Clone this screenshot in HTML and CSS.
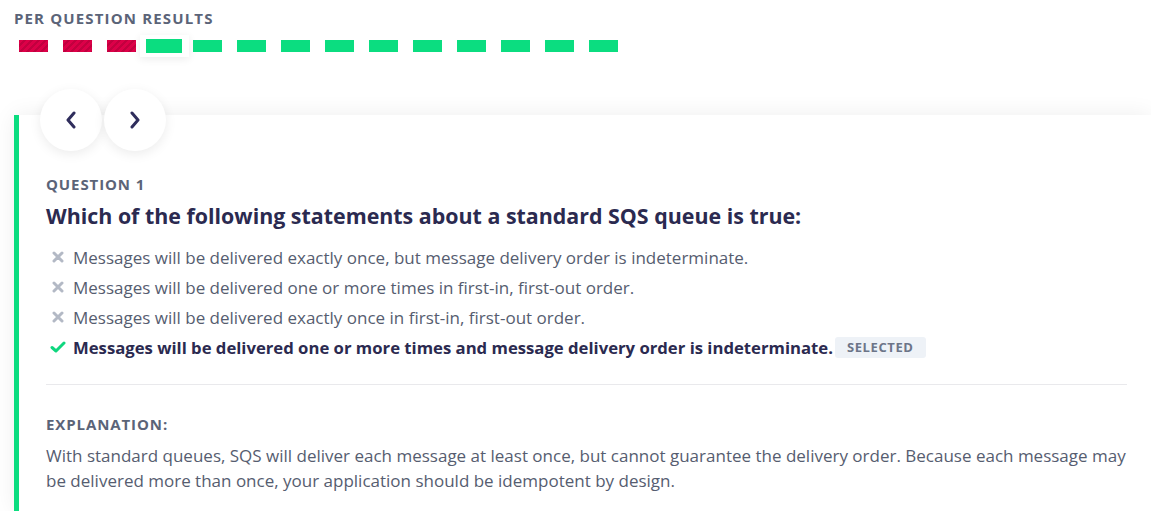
FILE: index.html
```html
<!DOCTYPE html>
<html>
<head>
<meta charset="utf-8">
<link rel="stylesheet" href="styles.css">
</head>
<body>
<div class="page">
  <h3 class="section-title">Per Question Results</h3>
  <div class="results">
    <span class="bar wrong"></span>
    <span class="bar wrong"></span>
    <span class="bar wrong"></span>
    <span class="bar right current"></span>
    <span class="bar right"></span>
    <span class="bar right"></span>
    <span class="bar right"></span>
    <span class="bar right"></span>
    <span class="bar right"></span>
    <span class="bar right"></span>
    <span class="bar right"></span>
    <span class="bar right"></span>
    <span class="bar right"></span>
    <span class="bar right"></span>
  </div>

  <div class="card">
    <div class="nav">
      <button class="nav-btn" aria-label="Previous">
        <svg width="14" height="18" viewBox="0 0 14 18"><path d="M10 2 L4 9 L10 16" fill="none" stroke="#2f2d5c" stroke-width="3" stroke-linecap="round" stroke-linejoin="round"/></svg>
      </button>
      <button class="nav-btn" aria-label="Next">
        <svg width="14" height="18" viewBox="0 0 14 18"><path d="M4 2 L10 9 L4 16" fill="none" stroke="#2f2d5c" stroke-width="3" stroke-linecap="round" stroke-linejoin="round"/></svg>
      </button>
    </div>
    <div class="label">Question 1</div>
    <h2 class="question">Which of the following statements about a standard SQS queue is true:</h2>
    <ul class="options">
      <li class="option">
        <svg class="icon" width="12" height="12" viewBox="0 0 12 12"><path d="M2 2 L10 10 M10 2 L2 10" stroke="#b3b9c5" stroke-width="3" stroke-linecap="round"/></svg>
        <span>Messages will be delivered exactly once, but message delivery order is indeterminate.</span>
      </li>
      <li class="option">
        <svg class="icon" width="12" height="12" viewBox="0 0 12 12"><path d="M2 2 L10 10 M10 2 L2 10" stroke="#b3b9c5" stroke-width="3" stroke-linecap="round"/></svg>
        <span>Messages will be delivered one or more times in first-in, first-out order.</span>
      </li>
      <li class="option">
        <svg class="icon" width="12" height="12" viewBox="0 0 12 12"><path d="M2 2 L10 10 M10 2 L2 10" stroke="#b3b9c5" stroke-width="3" stroke-linecap="round"/></svg>
        <span>Messages will be delivered exactly once in first-in, first-out order.</span>
      </li>
      <li class="option correct">
        <svg class="icon" width="16" height="12" viewBox="0 0 16 12"><path d="M2 6.5 L6 10 L14 2" fill="none" stroke="#0fd67e" stroke-width="3" stroke-linecap="round" stroke-linejoin="round"/></svg>
        <span>Messages will be delivered one or more times and message delivery order is indeterminate.</span>
        <span class="badge">Selected</span>
      </li>
    </ul>
    <hr class="divider">
    <div class="label expl-label">Explanation:</div>
    <p class="explanation">With standard queues, SQS will deliver each message at least once, but cannot guarantee the delivery order. Because each message may be delivered more than once, your application should be idempotent by design.</p>
  </div>
</div>
</body>
</html>
```

FILE: styles.css
```css
* { box-sizing: border-box; }
html, body { margin: 0; padding: 0; background: #fff; }
body {
  font-family: "Open Sans", "Noto Sans", sans-serif;
  color: #565d70;
  overflow: hidden;
}
.page { padding: 8px 0 0 14px; }

.section-title {
  margin: 0;
  font-size: 15px;
  font-weight: 700;
  letter-spacing: 1.15px;
  text-transform: uppercase;
  color: #5b6478;
  line-height: 20px;
}

.results {
  display: flex;
  align-items: center;
  gap: 15px;
  margin: 11px 0 0 5px;
  height: 14px;
  position: relative;
  z-index: 0;
}
.bar {
  display: block;
  width: 29px;
  height: 12px;
  flex: none;
}
.bar.wrong {
  background: repeating-linear-gradient(135deg, #dc0048 0 3px, #c2003f 3px 5px);
}
.bar.right { background: #0bdd80; }
.bar.current {
  position: relative;
  width: 36px;
  height: 14px;
  margin: 0 -4px 0 -5px;
}
.bar.current::before {
  content: "";
  position: absolute;
  left: -6px; right: -7px; top: -4px; bottom: -4px;
  background: #fff;
  box-shadow: 0 2px 8px rgba(0,0,0,0.08);
  z-index: -1;
}

.card {
  margin-top: 62px;
  background: #fff;
  border-left: 5px solid #0bdd80;
  box-shadow: 0 0 22px rgba(0,0,0,0.07);
  padding: 0 24px 0 27px;
  height: 396px;
  position: relative;
}
.nav {
  display: flex;
  gap: 2px;
  margin-left: -6px;
  transform: translateY(-26px);
  height: 62px;
  margin-bottom: -26px;
}
.nav-btn {
  width: 62px;
  height: 62px;
  border-radius: 50%;
  border: none;
  background: #fff;
  box-shadow: 0 3px 12px rgba(0,0,0,0.08);
  display: flex;
  align-items: center;
  justify-content: center;
  padding: 0;
}

.label {
  font-size: 15px;
  font-weight: 700;
  letter-spacing: 0.9px;
  text-transform: uppercase;
  color: #5b6478;
  line-height: 20px;
  margin-top: 23px;
}
.question {
  margin: 8px 0 0 0;
  font-size: 21.4px;
  font-weight: 700;
  color: #2b2a50;
  line-height: 28px;
}
.options {
  list-style: none;
  margin: 12px 0 0 0;
  padding: 0;
}
.option {
  display: flex;
  align-items: center;
  height: 30px;
  font-size: 17px;
  color: #565d70;
}
.option .icon { margin: 0 9px 0 6px; flex: none; }
.option.correct { font-weight: 700; color: #2b2a50; font-size: 16.7px; }
.option.correct .icon { margin: 0 7px 0 4px; }
.badge {
  margin-left: 2px;
  background: #eef2f7;
  color: #6c7588;
  font-size: 13px;
  font-weight: 700;
  letter-spacing: 0.6px;
  text-transform: uppercase;
  padding: 0 12px;
  line-height: 21px;
  border-radius: 3px;
}
.divider {
  border: none;
  border-top: 1px solid #e9e9ec;
  margin: 22px 0 0 0;
}
.expl-label { margin-top: 29px; }
.explanation {
  margin: 9px 0 0 0;
  font-size: 17px;
  line-height: 25px;
  color: #565d70;
}
```
